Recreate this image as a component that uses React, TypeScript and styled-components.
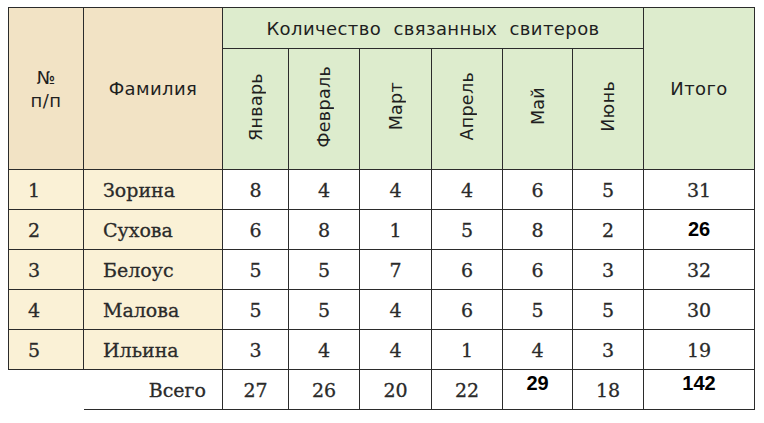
import React from "react";
import styled, { createGlobalStyle } from "styled-components";

const Global = createGlobalStyle`
  html, body { margin: 0; padding: 0; background: #ffffff; }
`;

const Page = styled.div`
  width: 764px;
  height: 423px;
  padding: 7px 0 0 8px;
  box-sizing: border-box;
  background: #fff;
`;

const Table = styled.table`
  border-collapse: collapse;
  table-layout: fixed;
  width: 747px;
`;

const line = "1.6px solid #2b2b2b";

const HeadCell = styled.th<{ $tone: "beige" | "green"; $h?: number }>`
  background: ${(p) => (p.$tone === "beige" ? "#f2e3c5" : "#ddeccd")};
  border: ${line};
  font-family: "DejaVu Sans", "Liberation Sans", sans-serif;
  font-weight: 400;
  font-size: 18px;
  letter-spacing: 0.4px;
  color: #1f1f1f;
  text-align: center;
  vertical-align: middle;
  padding: 0;
  height: ${(p) => (p.$h ? `${p.$h}px` : "auto")};
  line-height: 23px;
`;

const Vertical = styled.span`
  display: inline-block;
  writing-mode: vertical-rl;
  transform: rotate(180deg);
  font-family: "DejaVu Sans", "Liberation Sans", sans-serif;
  font-size: 17.5px;
  letter-spacing: 0.3px;
  line-height: 20px;
  color: #1f1f1f;
`;

const Cell = styled.td<{ $beige?: boolean; $align?: "left" | "center" | "right" }>`
  background: ${(p) => (p.$beige ? "#faf1d6" : "#ffffff")};
  border: ${line};
  height: 39px;
  padding: 0 ${(p) => (p.$align === "right" ? "16px" : "0")} 0 ${(p) => (p.$align === "left" ? "19px" : "0")};
  text-align: ${(p) => p.$align ?? "center"};
  vertical-align: middle;
  font-family: "DejaVu Serif", "Liberation Serif", serif;
  font-size: 19px;
  -webkit-text-stroke: 0.3px #2a2a2a;
  color: #2a2a2a;
  white-space: nowrap;
`;

const BlankCell = styled.td`
  border: none;
  border-top: ${line};
  background: #fff;
`;

const TotalLabel = styled(Cell)`
  border-left: none;
`;

const Ink = styled.span<{ $raise?: boolean }>`
  font-family: "Liberation Sans", Arial, sans-serif;
  font-weight: 700;
  font-size: 20px;
  color: #000;
  -webkit-text-stroke: 0;
  position: relative;
  top: ${(p) => (p.$raise ? "-6px" : "0")};
`;

const widths = [75, 139, 66, 71, 72, 71, 70, 71, 111];
const months = ["Январь", "Февраль", "Март", "Апрель", "Май", "Июнь"];

type Row = { n: number; name: string; v: number[]; total: React.ReactNode };

const rows: Row[] = [
  { n: 1, name: "Зорина", v: [8, 4, 4, 4, 6, 5], total: 31 },
  { n: 2, name: "Сухова", v: [6, 8, 1, 5, 8, 2], total: <Ink>26</Ink> },
  { n: 3, name: "Белоус", v: [5, 5, 7, 6, 6, 3], total: 32 },
  { n: 4, name: "Малова", v: [5, 5, 4, 6, 5, 5], total: 30 },
  { n: 5, name: "Ильина", v: [3, 4, 4, 1, 4, 3], total: 19 },
];

export default function App() {
  return (
    <Page>
      <Global />
      <Table>
        <colgroup>
          {widths.map((w, i) => (
            <col key={i} style={{ width: w }} />
          ))}
        </colgroup>
        <thead>
          <tr>
            <HeadCell $tone="beige" rowSpan={2}>
              №
              <br />
              п/п
            </HeadCell>
            <HeadCell $tone="beige" rowSpan={2}>
              Фамилия
            </HeadCell>
            <HeadCell $tone="green" colSpan={6} $h={40}>
              Количество&nbsp; связанных&nbsp; свитеров
            </HeadCell>
            <HeadCell $tone="green" rowSpan={2}>
              Итого
            </HeadCell>
          </tr>
          <tr>
            {months.map((m) => (
              <HeadCell key={m} $tone="green" $h={120}>
                <Vertical>{m}</Vertical>
              </HeadCell>
            ))}
          </tr>
        </thead>
        <tbody>
          {rows.map((r) => (
            <tr key={r.n}>
              <Cell $beige $align="left">
                {r.n}
              </Cell>
              <Cell $beige $align="left">
                {r.name}
              </Cell>
              {r.v.map((x, i) => (
                <Cell key={i}>{x}</Cell>
              ))}
              <Cell>{r.total}</Cell>
            </tr>
          ))}
          <tr>
            <BlankCell />
            <TotalLabel $align="right">Всего</TotalLabel>
            <Cell>27</Cell>
            <Cell>26</Cell>
            <Cell>20</Cell>
            <Cell>22</Cell>
            <Cell>
              <Ink $raise>29</Ink>
            </Cell>
            <Cell>18</Cell>
            <Cell>
              <Ink $raise>142</Ink>
            </Cell>
          </tr>
        </tbody>
      </Table>
    </Page>
  );
}
